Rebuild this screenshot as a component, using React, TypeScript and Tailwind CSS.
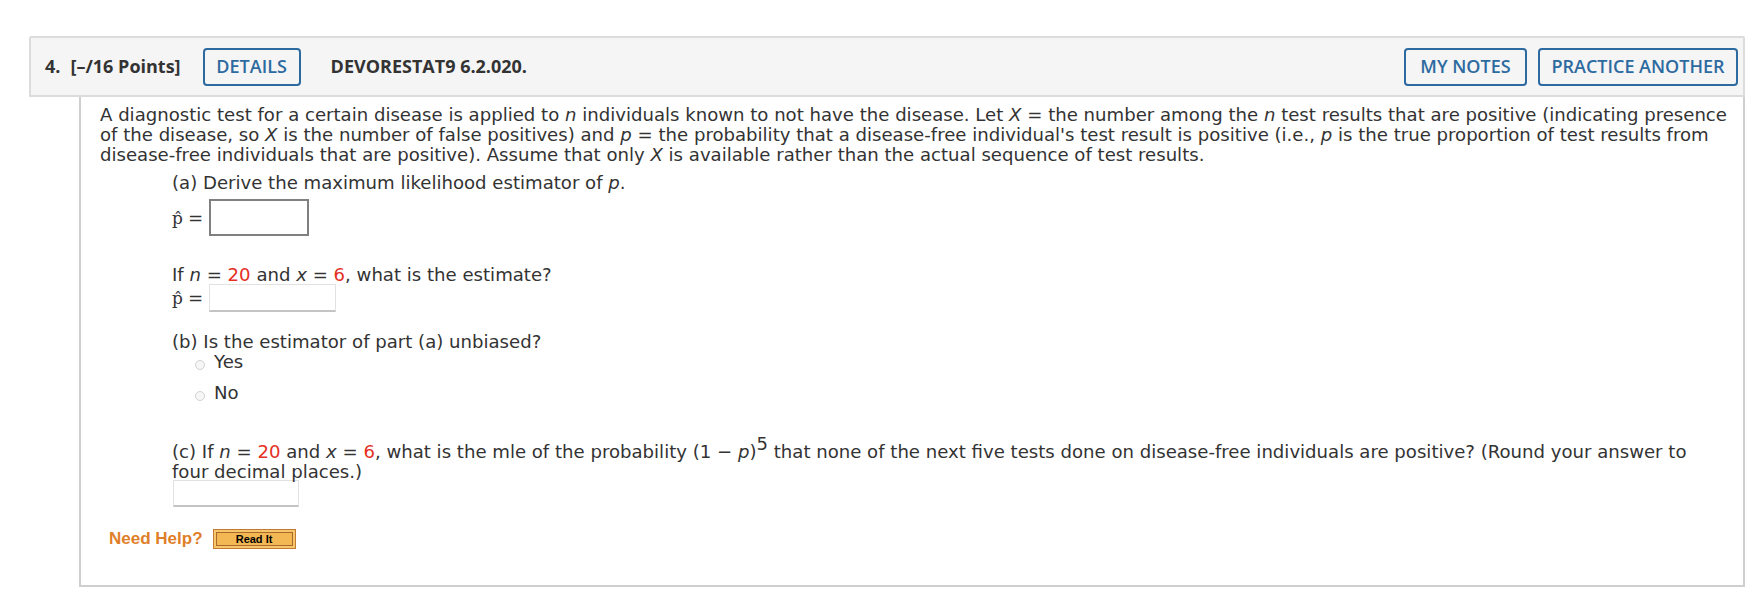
import React from "react";

const Red = ({ children }: { children: React.ReactNode }) => (
  <span className="text-[#e4301f]">{children}</span>
);

const V = ({ children }: { children: React.ReactNode }) => (
  <i className="italic">{children}</i>
);

const PHat = () => (
  <span className="font-['DejaVu_Serif',serif] text-[17px] leading-[20px]">p̂</span>
);

const Radio = ({ label }: { label: string }) => (
  <label className="flex items-center h-[20px] pl-[23px]">
    <span className="w-[10px] h-[10px] rounded-full border border-[#d2d2d2] bg-[#f6f6f6] translate-y-[3px]" />
    <span className="ml-[9px]">{label}</span>
  </label>
);

const HeaderButton = ({ label, w }: { label: string; w: string }) => (
  <button
    className={`${w} h-[38px] flex items-center justify-center rounded-[4px] border-2 border-[#2d6aa0] text-[#2d6aa0] text-[18px] font-semibold bg-transparent`}
  >
    {label}
  </button>
);

export default function App() {
  return (
    <div className="w-[1756px] h-[602px] bg-white overflow-hidden text-[#333] font-['DejaVu_Sans',sans-serif]">
      <div className="pt-[36px] pl-[29px] w-[1745px]">
        <header className="h-[61px] flex items-center border-2 border-[#dcdcdc] bg-[#f5f5f5] rounded-t-[2px] pl-[14px] pr-[5px] font-['Open_Sans',sans-serif]">
          <span className="font-bold text-[18px] text-[#333]">4.</span>
          <span className="ml-[10px] font-bold text-[18px] text-[#333]">[–/16 Points]</span>
          <div className="ml-[22px]">
            <HeaderButton label="DETAILS" w="w-[98px]" />
          </div>
          <span className="ml-[30px] font-bold text-[18px] text-[#333]">DEVORESTAT9 6.2.020.</span>
          <div className="ml-auto flex gap-[11px]">
            <HeaderButton label="MY NOTES" w="w-[123px]" />
            <HeaderButton label="PRACTICE ANOTHER" w="w-[200px]" />
          </div>
        </header>

        <div className="ml-[50px] h-[490px] border-x-2 border-b-2 border-[#cfcfcf] pl-[19px] pr-[4px] pt-[8px] text-[18.1px] leading-[20px]">
          <p>
            A diagnostic test for a certain disease is applied to <V>n</V> individuals known to not have the
            disease. Let <V>X</V> = the number among the <V>n</V> test results that are positive (indicating presence
            of the disease, so <V>X</V> is the number of false positives) and <V>p</V> = the probability that a
            disease-free individual's test result is positive (i.e., <V>p</V> is the true proportion of test results from
            disease-free individuals that are positive). Assume that only <V>X</V> is available rather than the actual
            sequence of test results.
          </p>

          <div className="pl-[72px] pr-[30px]">
            <div className="mt-[8px] h-[20px]">
              (a) Derive the maximum likelihood estimator of <V>p</V>.
            </div>
            <div className="mt-[6px] h-[37px] flex items-center">
              <PHat />
              <span className="ml-[5px]">=</span>
              <span className="ml-[6px] w-[100px] h-[37px] border-2 border-[#808080] bg-white" />
            </div>

            <div className="mt-[29px] h-[20px]">
              If <V>n</V> = <Red>20</Red> and <V>x</V> = <Red>6</Red>, what is the estimate?
            </div>
            <div className="-mt-[1px] h-[28px] flex items-center">
              <PHat />
              <span className="ml-[5px]">=</span>
              <span className="ml-[6px] w-[127px] h-[28px] border border-[#e2e2e2] border-b-2 border-b-[#c4c4c4] bg-white" />
            </div>

            <div className="mt-[20px] h-[20px]">(b) Is the estimator of part (a) unbiased?</div>
            <Radio label="Yes" />
            <div className="mt-[11px]">
              <Radio label="No" />
            </div>

            <div className="mt-[39px]">
              (c) If <V>n</V> = <Red>20</Red> and <V>x</V> = <Red>6</Red>, what is the mle of the probability (1 − <V>p</V>)
              <sup className="text-[18px] -top-[8px]">5</sup> that none of the next five tests done on disease-free
              individuals are positive? (Round your answer to four decimal places.)
            </div>
            <div className="-mt-[2px] ml-[1px] w-[126px] h-[27px] border border-[#e2e2e2] border-b-2 border-b-[#c4c4c4] bg-white" />
          </div>

          <div className="mt-[22px] ml-[9px] flex items-center h-[20px]">
            <span className="font-['Liberation_Sans',sans-serif] font-bold text-[17px] text-[#e07f2a]">Need Help?</span>
            <div className="ml-[10px] w-[83px] h-[20px] border border-[#c27a35] bg-[#f7c56a] p-[2px]">
              <div className="w-full h-full border border-[#a8692c] bg-[#f3b853] flex items-center justify-center font-['Liberation_Sans',sans-serif] font-bold text-[11px] leading-none text-black">
                Read It
              </div>
            </div>
          </div>
        </div>
      </div>
    </div>
  );
}
